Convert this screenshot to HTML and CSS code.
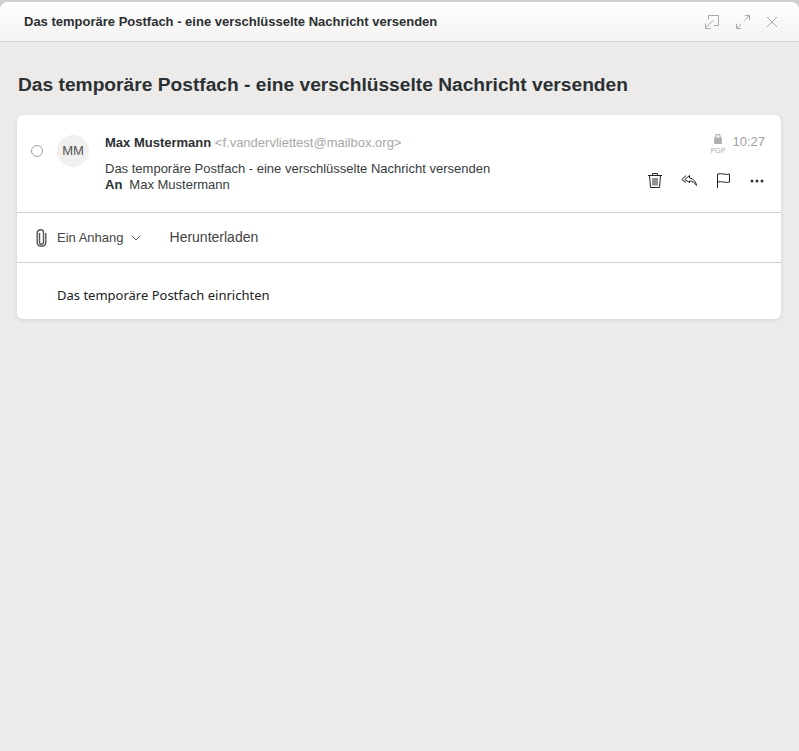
FILE: index.html
```html
<!DOCTYPE html>
<html lang="de">
<head>
    <meta charset="UTF-8">
    <title>Das temporäre Postfach - eine verschlüsselte Nachricht versenden</title>
    <link rel="stylesheet" href="styles.css">
</head>
<body>
    <div class="window">
        <div class="title-bar">
            <span class="title-text">Das temporäre Postfach - eine verschlüsselte Nachricht versenden</span>
            <div class="window-buttons">
                <svg width="14" height="14" viewBox="0 0 14 14" fill="none" stroke="#a9a9a7">
                    <path d="M3.5 4.5V.5H13.5V10.5H9"/>
                    <path d="M8.5 5L1 12.5M.5 8.5V13.5H5.5"/>
                </svg>
                <svg width="14" height="14" viewBox="0 0 14 14" fill="none" stroke="#a9a9a7">
                    <path d="M1 13L5.5 8.5M.5 9V13.5H5"/>
                    <path d="M13 1L8.5 5.5M9 .5H13.5V5"/>
                </svg>
                <svg width="10" height="10" viewBox="0 0 10 10" fill="none" stroke="#a9a9a7">
                    <path d="M0 0L10 10M10 0L0 10"/>
                </svg>
            </div>
        </div>

        <div class="content">
            <h1 class="subject">Das temporäre Postfach - eine verschlüsselte Nachricht versenden</h1>

            <div class="mail-card">
                <div class="mail-head">
                    <span class="select-circle"></span>
                    <span class="avatar">MM</span>
                    <div class="mail-info">
                        <div class="sender"><b>Max Mustermann</b> <span class="address">&lt;f.vandervliettest@mailbox.org&gt;</span></div>
                        <div class="mail-subject">Das temporäre Postfach - eine verschlüsselte Nachricht versenden</div>
                        <div class="recipient"><b>An</b><span>Max Mustermann</span></div>
                    </div>
                    <div class="mail-side">
                        <div class="mail-meta">
                            <div class="pgp">
                                <svg width="8" height="10" viewBox="0 0 8 10">
                                    <path d="M1.8 4.5V2.6a2.2 2.2 0 0 1 4.4 0V4.5" fill="none" stroke="#b0b0b0" stroke-width="1.2"/>
                                    <rect x="0" y="3.5" width="8" height="6.5" rx="1" fill="#b0b0b0"/>
                                </svg>
                                <span>PGP</span>
                            </div>
                            <span class="time">10:27</span>
                        </div>
                        <div class="mail-actions">
                            <svg class="trash" width="14" height="15" viewBox="0 0 14 15" fill="none" stroke="#222">
                                <path d="M0 2.5H14M4.5 2.5V.5H9.5V2.5"/>
                                <path d="M1.5 2.5L2.5 14.5H11.5L12.5 2.5"/>
                                <path d="M5 5V12.5M7 5V12.5M9 5V12.5"/>
                            </svg>
                            <svg width="16" height="11" viewBox="0 0 16 11" fill="none" stroke="#222">
                                <path d="M5 .5L.8 4.5L5 7.5"/>
                                <path d="M8.5 .5L3.8 4.5L8.5 7.5V6C11.5 6 13.5 7.5 15.5 10.5C15 7 12.5 3.5 8.5 3Z"/>
                            </svg>
                            <svg width="13" height="15" viewBox="0 0 13 15" fill="none" stroke="#222">
                                <path d="M.5 15V1C4.5 -.3 8.5 2.4 12.5 1V9C8.5 10.4 4.5 7.7 .5 9"/>
                            </svg>
                            <svg width="14" height="4" viewBox="0 0 14 4" fill="#333">
                                <circle cx="2" cy="2" r="1.5"/>
                                <circle cx="7" cy="2" r="1.5"/>
                                <circle cx="12" cy="2" r="1.5"/>
                            </svg>
                        </div>
                    </div>
                </div>

                <div class="attachments">
                    <svg class="clip" width="11" height="18" viewBox="0 0 11 18" fill="none" stroke="#555" stroke-width="1.4">
                        <path d="M3.5 4V13C3.5 14.6 4.4 15.3 5.5 15.3C6.6 15.3 7.5 14.6 7.5 13V3.5C7.5 1.9 6.6 .8 5.2 .8C3 .8 1.2 2 1.2 4.5V13C1.2 15.8 3 17.2 5.5 17.2C8 17.2 9.8 15.8 9.8 13V4"/>
                    </svg>
                    <span class="attach-label">Ein Anhang</span>
                    <svg class="chevron" width="10" height="6" viewBox="0 0 10 6" fill="none" stroke="#666">
                        <path d="M.5 .5L5 5L9.5 .5"/>
                    </svg>
                    <span class="download">Herunterladen</span>
                </div>

                <div class="mail-body">Das temporäre Postfach einrichten</div>
            </div>
        </div>
    </div>
</body>
</html>
```

FILE: styles.css
```css
/* Basic styling */
html, body {
    height: 100%;
}

body {
    margin: 0;
    background: #cfcfcf;
    font-family: 'Liberation Sans', sans-serif;
    color: #2b3033;
    overflow: hidden;
}

.window {
    box-sizing: border-box;
    height: 100%;
    margin-top: 2px;
    border-radius: 8px 8px 0 0;
    background: #ecebe9;
    display: flex;
    flex-direction: column;
}

/* Title bar */
.title-bar {
    height: 39px;
    flex: none;
    display: flex;
    align-items: center;
    justify-content: space-between;
    padding: 0 22px 0 24px;
    border-radius: 8px 8px 0 0;
    background: linear-gradient(#ffffff, #f4f3f1);
    border-bottom: 1px solid #d6d4d1;
}

.title-text {
    font-size: 13px;
    font-weight: 700;
}

.window-buttons {
    display: flex;
    align-items: center;
    gap: 17px;
}

/* Content */
.content {
    padding: 0 18px 0 17px;
}

.subject {
    margin: 31px 0 18px 1px;
    font-size: 19.2px;
    line-height: 24px;
    font-weight: 700;
}

.mail-card {
    background: white;
    border-radius: 6px;
    box-shadow: 0 1px 4px rgba(0,0,0,0.1);
}

.mail-head {
    height: 98px;
    box-sizing: border-box;
    display: flex;
    padding: 20px 16px 0 14px;
    border-bottom: 1px solid #d2d0cb;
}

.select-circle {
    box-sizing: border-box;
    width: 12px;
    height: 12px;
    margin: 10px 14px 0 0;
    border: 1px solid #a0a0a0;
    border-radius: 50%;
}

.avatar {
    width: 32px;
    height: 32px;
    margin-right: 16px;
    border-radius: 50%;
    background: #f0f0ef;
    color: #555;
    font-size: 13px;
    line-height: 32px;
    text-align: center;
}

.mail-info {
    flex: 1;
    font-size: 13px;
    line-height: 16px;
    color: #383d40;
}

.sender {
    margin-bottom: 10px;
}

.sender b, .recipient b {
    color: #2b3033;
}

.address {
    color: #a8a8a8;
}

.recipient span {
    margin-left: 7px;
}

.mail-side {
    display: flex;
    flex-direction: column;
    align-items: flex-end;
}

.mail-meta {
    display: flex;
    align-items: flex-start;
    gap: 7px;
    margin-top: -1px;
    height: 23px;
}

.pgp {
    display: flex;
    flex-direction: column;
    align-items: center;
    gap: 3px;
    color: #aaa;
    font-size: 7px;
    line-height: 8px;
}

.time {
    color: #a0a0a0;
    font-size: 13px;
    line-height: 16px;
}

.mail-actions {
    display: flex;
    align-items: center;
    gap: 20px;
    margin: 16px 1px 0 0;
}

.trash {
    margin-right: -1px;
}

/* Attachments row */
.attachments {
    height: 49px;
    display: flex;
    align-items: center;
    padding-left: 19px;
    border-bottom: 1px solid #d2d0cb;
}

.clip {
    margin-right: 10px;
}

.attach-label {
    font-size: 13px;
    color: #444;
}

.chevron {
    margin-left: 7px;
}

.download {
    margin: 0 0 2px 29px;
    font-size: 14px;
    color: #444;
}

.mail-body {
    padding: 22px 40px 14px;
    font-family: 'Noto Sans', sans-serif;
    font-size: 13px;
    line-height: 20px;
    color: #222;
}
```
